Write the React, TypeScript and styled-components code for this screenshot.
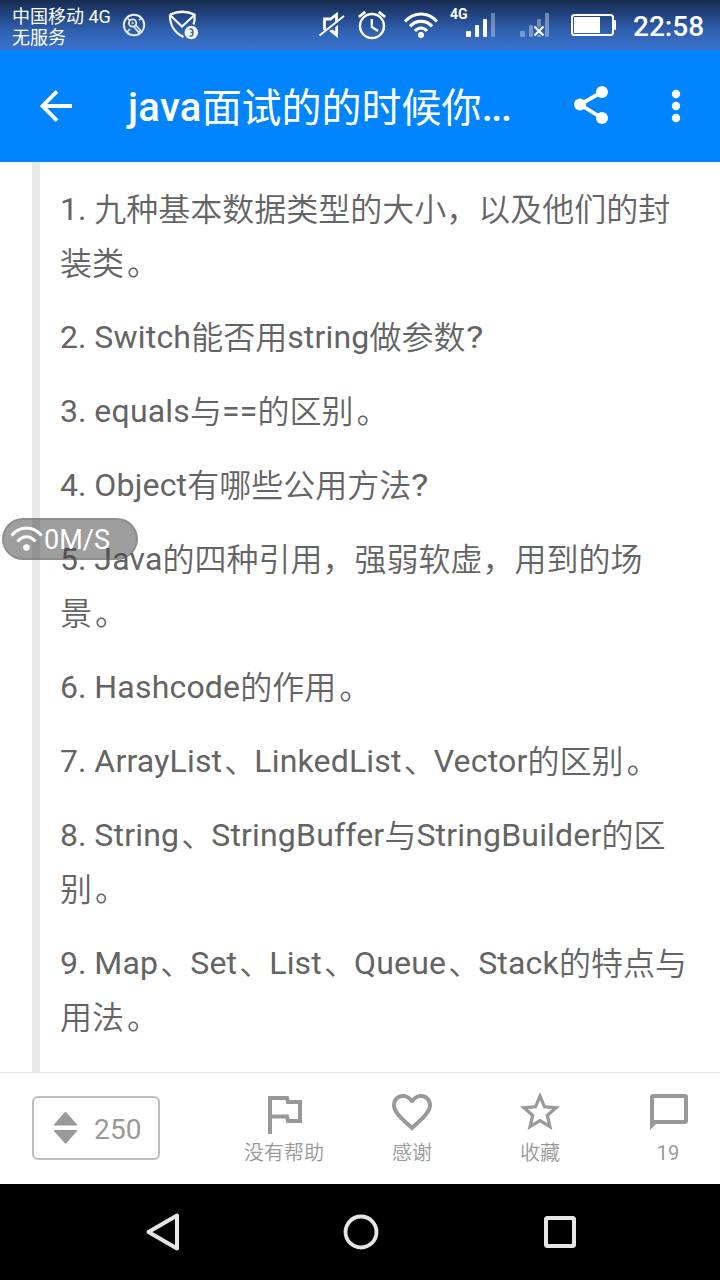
import React from "react";
import styled, { createGlobalStyle } from "styled-components";

const GlobalStyle = createGlobalStyle`
  *, *::before, *::after { box-sizing: border-box; }
  body { margin: 0; background: #fff; }
  svg { display: block; flex: none; }
`;

const Screen = styled.div`
  position: relative;
  width: 720px;
  height: 1280px;
  display: flex;
  flex-direction: column;
  overflow: hidden;
  background: #fff;
  font-family: Roboto, "Noto Sans CJK SC", sans-serif;
`;

const StatusBar = styled.header`
  height: 50px;
  flex: none;
  display: flex;
  align-items: center;
  padding: 0 15px 0 12px;
  color: #fff;
  background: linear-gradient(#182b4c 0%, #20407a 25%, #2f5fae 60%, #3a74cf 100%);
`;

const Carrier = styled.div`
  width: 110px;
  padding-top: 3px;
  font-size: 18px;
  line-height: 21px;
  white-space: nowrap;
`;

const StatusGlyphs = styled.div<{ $end?: boolean; $gap?: number }>`
  display: flex;
  align-items: center;
  gap: ${(p) => p.$gap ?? 0}px;
  margin-left: ${(p) => (p.$end ? "auto" : "0")};
`;

const GlyphSlot = styled.span<{ $gap: number }>`
  display: flex;
  margin-left: ${(p) => p.$gap}px;
`;

const Clock = styled.time`
  width: 72px;
  margin-left: 16px;
  padding-top: 3px;
  font-size: 28px;
  font-weight: 500;
  line-height: 32px;
  white-space: nowrap;
`;

const AppBar = styled.div`
  height: 112px;
  flex: none;
  display: flex;
  align-items: center;
  padding: 0 20px 0 32px;
  background: #0084ff;
  color: #fff;
`;

const Title = styled.h1`
  width: 398px;
  margin: 0 0 0 48px;
  padding-top: 3px;
  font-size: 40px;
  font-weight: 500;
  line-height: 56px;
  letter-spacing: 0.3px;
  white-space: nowrap;
  font-family: Roboto, sans-serif;
`;

const TitleHan = styled.span`
  font-family: "Noto Sans CJK SC", sans-serif;
  font-weight: 400;
  line-height: 1;
  letter-spacing: 0;
  vertical-align: -1px;
`;

const TitleDots = styled.span`
  letter-spacing: -1.4px;
`;

const IconButton = styled.button<{ $gap?: number }>`
  display: flex;
  padding: 0;
  border: 0;
  margin-left: ${(p) => p.$gap ?? 0}px;
  background: none;
  color: inherit;
`;

const Article = styled.main`
  flex: 1;
  min-height: 0;
  padding-left: 32px;
  overflow: hidden;
`;

const Quote = styled.blockquote`
  height: 100%;
  margin: 0;
  padding: 20px 28px 0 20px;
  border-left: 8px solid #e9e9e9;
  color: #646464;
  font-size: 32px;
  line-height: 54px;
`;

const Question = styled.p`
  margin: 0 0 20px;
`;

const Latin = styled.span`
  letter-spacing: 0.18px;
`;

const Han = styled.span`
  font-family: "Noto Sans CJK SC", sans-serif;
  font-weight: 350;
  line-height: 1;
  vertical-align: -1px;
`;

const Stop = styled(Han)<{ $shift: number }>`
  padding-left: ${(p) => p.$shift}px;
  margin-right: ${(p) => -p.$shift}px;
`;

const QuestionMark = styled.span`
  display: inline-block;
  line-height: 1;
  transform: scaleX(1.15);
  transform-origin: left;
`;

const SpeedBadge = styled.div`
  position: absolute;
  left: 2px;
  top: 518px;
  width: 136px;
  height: 42px;
  display: flex;
  align-items: center;
  gap: 1px;
  padding-left: 5px;
  border: 2px solid rgba(110, 110, 110, 0.35);
  border-radius: 21px;
  background: rgba(62, 62, 62, 0.5);
  color: #fff;
  font-size: 27px;
  line-height: 38px;
`;

const BadgeLabel = styled.span`
  padding-top: 2px;
`;

const ActionBar = styled.footer`
  height: 112px;
  flex: none;
  display: flex;
  align-items: flex-start;
  padding-left: 32px;
  border-top: 1px solid #e4e4e4;
  color: #999;
`;

const VoteBox = styled.button`
  width: 128px;
  height: 64px;
  flex: none;
  display: flex;
  align-items: center;
  gap: 16px;
  margin: 23px 60px 0 0;
  padding: 0 0 0 19px;
  border: 2px solid #bdbdbd;
  border-radius: 6px;
  background: #fff;
  color: inherit;
  font: 28px/60px Roboto, sans-serif;
`;

const VoteCount = styled.span`
  padding-top: 3px;
  letter-spacing: 0.2px;
`;

const Action = styled.button<{ $count?: boolean }>`
  width: 128px;
  height: 100%;
  flex: none;
  display: flex;
  flex-direction: column;
  align-items: center;
  gap: 2px;
  padding: 15px 0 0;
  border: 0;
  background: none;
  color: inherit;
  font: 20px/30px Roboto, "Noto Sans CJK SC", sans-serif;
  font-weight: ${(p) => (p.$count ? 400 : 350)};
`;

const NavBar = styled.nav`
  height: 96px;
  flex: none;
  display: flex;
  align-items: center;
  justify-content: space-between;
  padding: 0 143px 0 145px;
  background: #000;
  color: #e6e6e6;
`;

const questions = [
  "1. 九种基本数据类型的大小，以及他们的封装类。",
  "2. Switch能否用string做参数?",
  "3. equals与==的区别。",
  "4. Object有哪些公用方法?",
  "5. Java的四种引用，强弱软虚，用到的场景。",
  "6. Hashcode的作用。",
  "7. ArrayList、LinkedList、Vector的区别。",
  "8. String、StringBuffer与StringBuilder的区别。",
  "9. Map、Set、List、Queue、Stack的特点与用法。",
];

// Splits a line into script runs so each one gets its own font and spacing.
const RichLine = ({ text }: { text: string }) => (
  <>
    {text
      .split(/(\d\. |[A-Za-z=]+|[。、]|\?)/)
      .filter(Boolean)
      .map((run, i) => {
        if (/^\d/.test(run)) return <React.Fragment key={i}>{run}</React.Fragment>;
        if (/^[A-Za-z=]/.test(run)) return <Latin key={i}>{run}</Latin>;
        if (/^[。、]/.test(run)) return <Stop key={i} $shift={run === "。" ? 3 : 2}>{run}</Stop>;
        if (run === "?") return <QuestionMark key={i}>{run}</QuestionMark>;
        return <Han key={i}>{run}</Han>;
      })}
  </>
);

const KeyIcon = () => (
  <svg width="24" height="50" viewBox="122 0 24 50" fill="none" stroke="#e6ecf8">
    <circle cx="134" cy="25" r="10.2" strokeWidth="1.9" />
    <circle cx="132.6" cy="23" r="3.7" strokeWidth="1.8" />
    <circle cx="132.6" cy="23" r="0.8" strokeWidth="1" />
    <path d="M135.200 24.500L140.300 30.300L138.300 32L133.800 26.500" strokeWidth="1.600" />
    <path d="M127.500 18.500l2 1.700M139 20.200l2.500-2.500M127 32l3-3" strokeWidth="1.600" />
  </svg>
);

const MailShieldIcon = () => (
  <svg width="32" height="50" viewBox="168 0 32 50" fill="none" stroke="#f4f7fd">
    <path d="M170 14.500C178 11 187 11 194.500 14.500C195 19 194.500 22 193.500 24.500M170 14.500C169.500 25 175 33 183.500 37" strokeWidth="2.300" />
    <path d="M170.500 15.500L182 26.500L194 15.500" strokeWidth="2.300" />
    <circle cx="191.300" cy="32.500" r="6.800" fill="#f4f7fd" stroke="none" />
    <path d="M189.500 29h1.500q2 0 2 3.500t-2 3.500h-1.500M190.500 32.500h2" stroke="#3869bd" strokeWidth="1.500" />
  </svg>
);

const MuteIcon = () => (
  <svg width="28" height="50" viewBox="318 0 28 50" fill="none" stroke="#fff">
    <path d="M324.500 30V19H330.500L336.500 14.500V22" strokeWidth="2.800" />
    <path d="M329 31L338 38V25L335.200 27.300V31.500L332.500 29.500z" fill="#fff" stroke="none" />
    <path d="M319.500 35.500L344 16" strokeWidth="2" />
  </svg>
);

const AlarmIcon = () => (
  <svg width="30" height="50" viewBox="357 0 30 50" fill="none" stroke="#fff">
    <circle cx="372" cy="26" r="12" strokeWidth="2.400" />
    <path d="M371.800 19V27L378 31" strokeWidth="2.200" />
    <path d="M358.800 17L365.300 11.800M385.200 17L378.700 11.800" strokeWidth="2.800" />
  </svg>
);

const WifiIcon = () => (
  <svg width="36" height="50" viewBox="403 0 36 50" fill="none" stroke="#fff" strokeWidth="3.200">
    <path d="M405 21.500C414 11.500 428 11.500 437 21.500" />
    <path d="M410 26.300C416 19.700 426 19.700 432 26.300" />
    <path d="M415 31C418.500 27 423.500 27 427 31" />
    <circle cx="421" cy="35" r="3" fill="#fff" stroke="none" />
  </svg>
);

const SignalIcon = () => (
  <svg width="46" height="50" viewBox="450 0 46 50" fill="#fff">
    <text x="450" y="19" fontSize="14" fontWeight="700" fontFamily="Roboto, sans-serif">4G</text>
    <rect x="466" y="31" width="5" height="6" rx="1" />
    <rect x="475" y="25" width="4" height="12" rx="1" />
    <rect x="483" y="19" width="4" height="18" rx="1" />
    <rect x="491" y="13" width="4" height="24" rx="1" opacity="0.330" />
  </svg>
);

const NoSignalIcon = () => (
  <svg width="30" height="50" viewBox="520 0 30 50" fill="#fff">
    <g opacity="0.350">
      <rect x="520" y="31" width="5" height="6" rx="1" />
      <rect x="529" y="25" width="4" height="12" rx="1" />
      <path d="M537 20q0-1 1-1h2q1 0 1 1v6l-2 2-2-2zM537 36l2-2 2 2v1h-4z" />
      <rect x="545" y="13" width="4" height="24" rx="1" />
    </g>
    <path d="M534.500 26.500L543.500 35.500M543.500 26.500L534.500 35.500" stroke="#fff" strokeWidth="2.200" />
  </svg>
);

const BatteryIcon = () => (
  <svg width="46" height="50" viewBox="571 0 46 50" fill="#fff">
    <rect x="572" y="15" width="41" height="20" rx="2.500" fill="none" stroke="#fff" strokeWidth="2" />
    <rect x="574" y="17" width="26" height="16" />
    <path d="M613.500 20h1.500q1 0 1 1v8q0 1-1 1h-1.500z" />
  </svg>
);

const BackIcon = () => (
  <svg width="48" height="48" viewBox="32 82 48 48" fill="none" stroke="#fff" strokeWidth="3.800">
    <path d="M72 106H43M57 91.300L42.500 106L57 120.700" />
  </svg>
);

const ShareIcon = () => (
  <svg width="48" height="48" viewBox="567 82 48 48" fill="#fff">
    <path d="M602 92L580 104.500L602 118" fill="none" stroke="#fff" strokeWidth="3.800" />
    <circle cx="602" cy="92" r="6" />
    <circle cx="580" cy="104.500" r="6" />
    <circle cx="602" cy="118" r="6" />
  </svg>
);

const MoreIcon = () => (
  <svg width="48" height="48" viewBox="652 82 48 48" fill="#fff">
    <circle cx="676" cy="94" r="4.200" />
    <circle cx="676" cy="106" r="4.200" />
    <circle cx="676" cy="118" r="4.200" />
  </svg>
);

const BadgeWifi = () => (
  <svg width="34" height="30" viewBox="9 524 34 30" fill="none" stroke="#fff" strokeWidth="3">
    <path d="M11.500 535.500C20 525.500 33 525.500 41.500 535.500" />
    <path d="M17.500 541.500C23 535 30 535 35.500 541.500" />
    <circle cx="26.500" cy="547.500" r="3.300" fill="#fff" stroke="none" />
  </svg>
);

const VoteArrows = () => (
  <svg width="25" height="36" viewBox="0 0 25 36" fill="#999">
    <path d="M12.500 2L24 15H1zM1 20.500H24L12.500 33.500z" stroke="#999" strokeLinejoin="round" />
  </svg>
);

const FlagIcon = () => (
  <svg width="48" height="48" viewBox="260 1088 48 48" fill="none" stroke="#999" strokeWidth="4">
    <path d="M270 1134V1098H287L288 1102H300V1121H288L287 1116.500H270" />
  </svg>
);

const HeartIcon = () => (
  <svg width="48" height="48" viewBox="0 0 24 24" fill="#999">
    <path d="M16.500 3c-1.740 0-3.410.810-4.500 2.090C10.910 3.810 9.240 3 7.500 3 4.420 3 2 5.420 2 8.500c0 3.780 3.400 6.860 8.550 11.540L12 21.350l1.450-1.320C18.600 15.360 22 12.280 22 8.500 22 5.420 19.580 3 16.500 3zm-4.400 15.550l-.1.100-.1-.1C7.140 14.240 4 11.390 4 8.500 4 6.500 5.500 5 7.500 5c1.540 0 3.040.990 3.570 2.360h1.870C13.460 5.990 14.960 5 16.500 5c2 0 3.500 1.500 3.500 3.500 0 2.890-3.140 5.740-7.900 10.050z" />
  </svg>
);

const StarIcon = () => (
  <svg width="48" height="48" viewBox="0 0 24 24" fill="#999">
    <path d="M22 9.240l-7.190-.620L12 2 9.190 8.630 2 9.240l5.460 4.730L5.820 21 12 17.270 18.180 21l-1.630-7.030L22 9.240zM12 15.400l-3.760 2.270 1-4.280-3.320-2.880 4.380-.380L12 6.100l1.710 4.040 4.380.380-3.320 2.880 1 4.280L12 15.400z" />
  </svg>
);

const CommentIcon = () => (
  <svg width="48" height="48" viewBox="644 1088 48 48" fill="none" stroke="#999" strokeWidth="4">
    <path d="M652 1126V1097q0-1 1-1H685q1 0 1 1V1121q0 1-1 1H654" />
    <path d="M650 1130V1121H659z" fill="#999" stroke="none" />
  </svg>
);

const NavBack = () => (
  <svg width="36" height="40" viewBox="145 1212 36 40" fill="none" stroke="currentColor" strokeWidth="4" strokeLinejoin="round">
    <path d="M177 1215.500V1248.500L148.500 1232z" />
  </svg>
);

const NavHome = () => (
  <svg width="36" height="36" viewBox="1 0 36 36" fill="none" stroke="currentColor" strokeWidth="3.800" overflow="visible">
    <circle cx="18" cy="18" r="15.500" />
  </svg>
);

const NavRecent = () => (
  <svg width="34" height="34" viewBox="0 0 34 34" fill="none" stroke="currentColor" strokeWidth="4">
    <rect x="3" y="3" width="28" height="28" rx="1.500" />
  </svg>
);

export default function App() {
  return (
    <>
      <GlobalStyle />
      <Screen>
        <StatusBar>
          <Carrier>
            <div>中国移动 4G</div>
            <div>无服务</div>
          </Carrier>
          <StatusGlyphs $gap={22}>
            <KeyIcon />
            <MailShieldIcon />
          </StatusGlyphs>
          <StatusGlyphs $end>
            <MuteIcon />
            <GlyphSlot $gap={11}><AlarmIcon /></GlyphSlot>
            <GlyphSlot $gap={16}><WifiIcon /></GlyphSlot>
            <GlyphSlot $gap={11}><SignalIcon /></GlyphSlot>
            <GlyphSlot $gap={24}><NoSignalIcon /></GlyphSlot>
            <GlyphSlot $gap={21}><BatteryIcon /></GlyphSlot>
            <Clock>22:58</Clock>
          </StatusGlyphs>
        </StatusBar>
        <AppBar>
          <IconButton aria-label="返回"><BackIcon /></IconButton>
          <Title>
            java<TitleHan>面试的的时候你</TitleHan><TitleDots>...</TitleDots>
          </Title>
          <IconButton $gap={41} aria-label="分享"><ShareIcon /></IconButton>
          <IconButton $gap={37} aria-label="更多"><MoreIcon /></IconButton>
        </AppBar>
        <Article>
          <Quote>
            {questions.map((q) => (
              <Question key={q}><RichLine text={q} /></Question>
            ))}
          </Quote>
        </Article>
        <ActionBar>
          <VoteBox><VoteArrows /><VoteCount>250</VoteCount></VoteBox>
          <Action><FlagIcon />没有帮助</Action>
          <Action><HeartIcon />感谢</Action>
          <Action><StarIcon />收藏</Action>
          <Action $count><CommentIcon />19</Action>
        </ActionBar>
        <NavBar>
          <NavBack />
          <NavHome />
          <NavRecent />
        </NavBar>
        <SpeedBadge><BadgeWifi /><BadgeLabel>0M/S</BadgeLabel></SpeedBadge>
      </Screen>
    </>
  );
}
